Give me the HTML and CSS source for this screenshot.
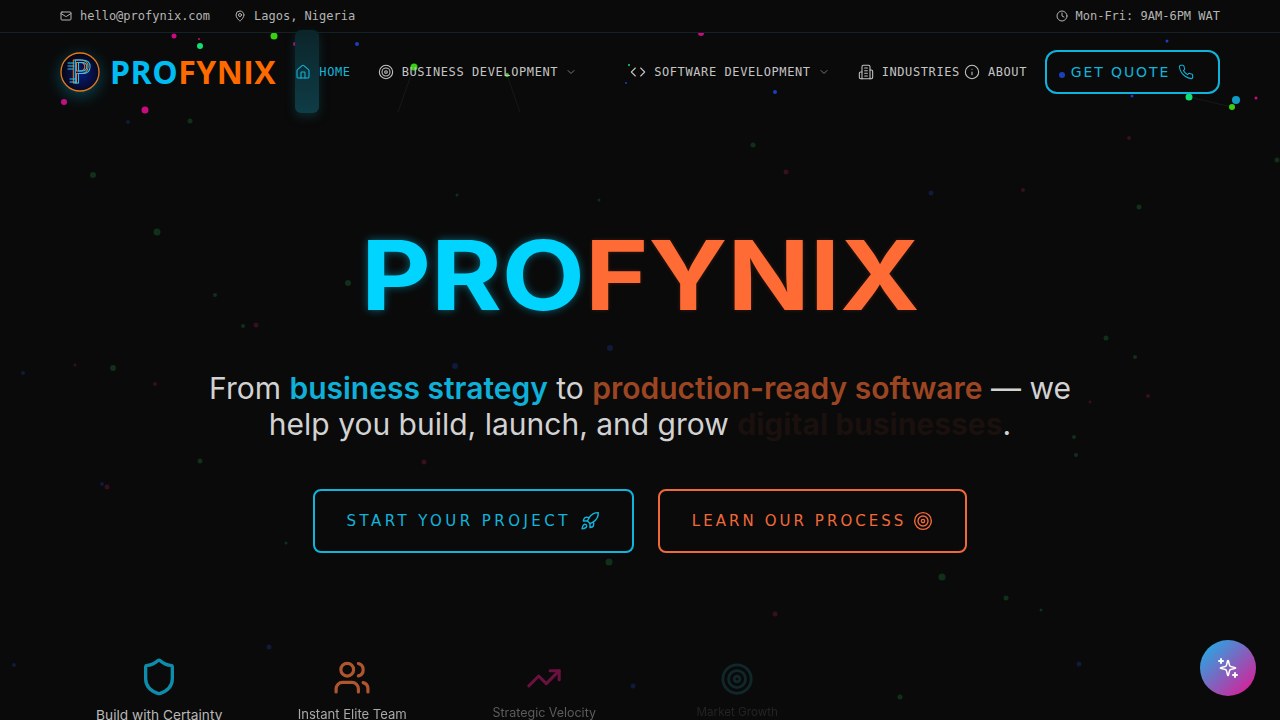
FILE: index.html
```html
<!DOCTYPE html>
<html>
  <head>
    <title>Profynix</title>
    <meta name="viewport" content="width=device-width, initial-scale=1">
    <link rel="stylesheet" href="styles.css">
  </head>
  <body>
    <svg class="sprite" width="0" height="0">
      <symbol id="i-mail" viewBox="0 0 24 24"><rect x="2" y="4" width="20" height="16" rx="2"/><path d="m22 7-8.97 5.7a1.94 1.94 0 0 1-2.06 0L2 7"/></symbol>
      <symbol id="i-pin" viewBox="0 0 24 24"><path d="M20 10c0 4.993-5.539 10.193-7.399 11.799a1 1 0 0 1-1.202 0C9.539 20.193 4 14.993 4 10a8 8 0 0 1 16 0"/><circle cx="12" cy="10" r="3"/></symbol>
      <symbol id="i-clock" viewBox="0 0 24 24"><circle cx="12" cy="12" r="10"/><polyline points="12 6 12 12 16 14"/></symbol>
      <symbol id="i-home" viewBox="0 0 24 24"><path d="M15 21v-8a1 1 0 0 0-1-1h-4a1 1 0 0 0-1 1v8"/><path d="M3 10a2 2 0 0 1 .709-1.528l7-5.999a2 2 0 0 1 2.582 0l7 5.999A2 2 0 0 1 21 10v9a2 2 0 0 1-2 2H5a2 2 0 0 1-2-2z"/></symbol>
      <symbol id="i-target" viewBox="0 0 24 24"><circle cx="12" cy="12" r="10"/><circle cx="12" cy="12" r="6"/><circle cx="12" cy="12" r="2"/></symbol>
      <symbol id="i-chevron" viewBox="0 0 24 24"><path d="m6 9 6 6 6-6"/></symbol>
      <symbol id="i-code" viewBox="0 0 24 24"><path d="m16 18 6-6-6-6"/><path d="m8 6-6 6 6 6"/></symbol>
      <symbol id="i-building" viewBox="0 0 24 24"><path d="M6 22V4a2 2 0 0 1 2-2h8a2 2 0 0 1 2 2v18Z"/><path d="M6 12H4a2 2 0 0 0-2 2v6a2 2 0 0 0 2 2h2"/><path d="M18 9h2a2 2 0 0 1 2 2v9a2 2 0 0 1-2 2h-2"/><path d="M10 6h4"/><path d="M10 10h4"/><path d="M10 14h4"/><path d="M10 18h4"/></symbol>
      <symbol id="i-info" viewBox="0 0 24 24"><circle cx="12" cy="12" r="10"/><path d="M12 16v-4"/><path d="M12 8h.01"/></symbol>
      <symbol id="i-phone" viewBox="0 0 24 24"><path d="M22 16.92v3a2 2 0 0 1-2.18 2 19.79 19.79 0 0 1-8.63-3.07 19.5 19.5 0 0 1-6-6 19.79 19.79 0 0 1-3.07-8.67A2 2 0 0 1 4.11 2h3a2 2 0 0 1 2 1.72 12.84 12.84 0 0 0 .7 2.81 2 2 0 0 1-.45 2.11L8.09 9.91a16 16 0 0 0 6 6l1.27-1.27a2 2 0 0 1 2.11-.45 12.84 12.84 0 0 0 2.81.7A2 2 0 0 1 22 16.92z"/></symbol>
      <symbol id="i-rocket" viewBox="0 0 24 24"><path d="M4.5 16.5c-1.5 1.26-2 5-2 5s3.74-.5 5-2c.71-.84.7-2.13-.09-2.91a2.18 2.18 0 0 0-2.91-.09z"/><path d="m12 15-3-3a22 22 0 0 1 2-3.95A12.88 12.88 0 0 1 22 2c0 2.72-.78 7.5-6 11a22.35 22.35 0 0 1-4 2z"/><path d="M9 12H4s.55-3.03 2-4c1.62-1.08 5 0 5 0"/><path d="M12 15v5s3.03-.55 4-2c1.08-1.62 0-5 0-5"/></symbol>
      <symbol id="i-shield" viewBox="0 0 24 24"><path d="M20 13c0 5-3.5 7.5-7.66 8.95a1 1 0 0 1-.67-.01C7.5 20.5 4 18 4 13V6a1 1 0 0 1 1-1c2 0 4.5-1.2 6.24-2.72a1.17 1.17 0 0 1 1.52 0C14.51 3.81 17 5 19 5a1 1 0 0 1 1 1z"/></symbol>
      <symbol id="i-users" viewBox="0 0 24 24"><path d="M16 21v-2a4 4 0 0 0-4-4H6a4 4 0 0 0-4 4v2"/><circle cx="9" cy="7" r="4"/><path d="M22 21v-2a4 4 0 0 0-3-3.87"/><path d="M16 3.13a4 4 0 0 1 0 7.75"/></symbol>
      <symbol id="i-trend" viewBox="0 0 24 24"><polyline points="22 7 13.5 15.5 8.5 10.5 2 17"/><polyline points="16 7 22 7 22 13"/></symbol>
      <symbol id="i-sparkles" viewBox="0 0 24 24"><path transform="translate(12 12) scale(0.76) translate(-12 -12)" d="M9.937 15.5A2 2 0 0 0 8.5 14.063l-6.135-1.582a.5.5 0 0 1 0-.962L8.5 9.936A2 2 0 0 0 9.937 8.5l1.582-6.135a.5.5 0 0 1 .963 0L14.063 8.5A2 2 0 0 0 15.5 9.937l6.135 1.581a.5.5 0 0 1 0 .964L15.5 14.063a2 2 0 0 0-1.437 1.437l-1.582 6.135a.5.5 0 0 1-.963 0z"/><path d="M5 3v4"/><path d="M7 5H3"/><path d="M19 17v4"/><path d="M21 19h-4"/></symbol>
    </svg>

    <!-- particle field -->
    <svg class="particles" width="1280" height="720" viewBox="0 0 1280 720">
      <g class="links">
        <line x1="1189" y1="97" x2="1232" y2="107"/>
        <line x1="1232" y1="107" x2="1236" y2="100"/>
        <line x1="414" y1="67" x2="398" y2="112"/>
        <line x1="507" y1="75" x2="520" y2="112"/>
      </g>
      <g class="magenta">
        <circle cx="174" cy="36" r="2.5"/><circle cx="199" cy="39" r="1"/><circle cx="295" cy="44" r="2"/>
        <circle cx="701" cy="33" r="3"/><circle cx="1256" cy="98" r="1.5"/><circle cx="64" cy="102" r="3"/>
        <circle cx="145" cy="110" r="3.5"/>
      </g>
      <g class="green">
        <circle cx="200" cy="46" r="3"/><circle cx="629" cy="65" r="1"/><circle cx="1189" cy="97" r="3.5"/>
      </g>
      <g class="lime">
        <circle cx="274" cy="36" r="3.5"/><circle cx="414" cy="67" r="3.5"/><circle cx="507" cy="75" r="2"/>
        <circle cx="1232" cy="107" r="3"/>
      </g>
      <g class="blue">
        <circle cx="357" cy="44" r="2"/><circle cx="626" cy="83" r="1"/><circle cx="775" cy="92" r="2"/>
        <circle cx="1167" cy="41" r="1.5"/><circle cx="1062" cy="75" r="3"/><circle cx="1132" cy="96" r="1.5"/>
      </g>
      <circle class="cyan" cx="1236" cy="100" r="4"/>
      <g class="dim-green">
        <circle cx="157" cy="232" r="3.5"/><circle cx="93" cy="175" r="3"/><circle cx="190" cy="121" r="2.5"/>
        <circle cx="753" cy="145" r="2.5"/><circle cx="1139" cy="207" r="2.5"/><circle cx="1277" cy="160" r="2.5"/>
        <circle cx="243" cy="326" r="2"/><circle cx="215" cy="295" r="2"/><circle cx="348" cy="283" r="3"/>
        <circle cx="1106" cy="338" r="2.5"/><circle cx="1135" cy="357" r="2"/><circle cx="1074" cy="437" r="2"/>
        <circle cx="1076" cy="455" r="2"/><circle cx="200" cy="461" r="2.5"/><circle cx="286" cy="543" r="1.5"/>
        <circle cx="609" cy="562" r="3.5"/><circle cx="942" cy="577" r="3.5"/><circle cx="1006" cy="598" r="2.5"/>
        <circle cx="1041" cy="610" r="1.5"/><circle cx="900" cy="697" r="2.5"/><circle cx="599" cy="200" r="1.5"/>
        <circle cx="457" cy="195" r="1.5"/><circle cx="113" cy="368" r="3"/>
      </g>
      <g class="dim-magenta">
        <circle cx="786" cy="172" r="2.5"/><circle cx="1023" cy="190" r="2"/><circle cx="1129" cy="138" r="2"/>
        <circle cx="155" cy="384" r="2"/><circle cx="256" cy="325" r="2.5"/><circle cx="1148" cy="396" r="2"/>
        <circle cx="1090" cy="402" r="1.5"/><circle cx="424" cy="462" r="2.5"/><circle cx="107" cy="487" r="2.5"/>
        <circle cx="775" cy="614" r="2.5"/><circle cx="75" cy="365" r="1.5"/>
      </g>
      <g class="dim-blue">
        <circle cx="931" cy="193" r="2.5"/><circle cx="23" cy="373" r="2"/><circle cx="455" cy="366" r="3"/>
        <circle cx="610" cy="348" r="3"/><circle cx="102" cy="484" r="2"/><circle cx="269" cy="647" r="2.5"/>
        <circle cx="14" cy="665" r="2"/><circle cx="1079" cy="664" r="2.5"/><circle cx="633" cy="686" r="2.5"/>
        <circle cx="128" cy="122" r="2"/>
      </g>
    </svg>

    <div class="page">
      <div class="topbar">
        <div class="topbar-group">
          <span class="contact"><svg class="icon"><use href="#i-mail"/></svg>hello@profynix.com</span>
          <span class="contact"><svg class="icon"><use href="#i-pin"/></svg>Lagos, Nigeria</span>
        </div>
        <span class="contact"><svg class="icon"><use href="#i-clock"/></svg>Mon-Fri: 9AM-6PM WAT</span>
      </div>

      <header class="header">
        <a class="brand">
          <svg class="brand-mark" viewBox="0 0 40 40" width="40" height="40">
            <defs>
              <radialGradient id="markFill" cx="55%" cy="55%" r="55%">
                <stop offset="0%" stop-color="#0a1a7a"/>
                <stop offset="100%" stop-color="#05060f"/>
              </radialGradient>
            </defs>
            <circle cx="20" cy="20" r="19" fill="url(#markFill)" stroke="#e8761e" stroke-width="1.3"/>
            <text x="20" y="31" class="mark-letter mark-orange">P</text>
            <text x="22" y="31" class="mark-letter mark-cyan">P</text>
            <path class="mark-traces" d="M8 11h6M8 14h6M8 17h5M10 27h5M10 30h6"/>
          </svg>
          <span class="brand-name"><span class="cyan-text">PRO</span><span class="orange-text">FYNIX</span></span>
        </a>
        <nav class="nav">
          <a class="nav-link active space-27"><span class="nav-glow"></span><svg class="icon-nav"><use href="#i-home"/></svg>HOME</a>
          <a class="nav-link space-53"><svg class="icon-nav"><use href="#i-target"/></svg>BUSINESS DEVELOPMENT<svg class="icon-chevron"><use href="#i-chevron"/></svg></a>
          <a class="nav-link space-28"><svg class="icon-nav"><use href="#i-code"/></svg>SOFTWARE DEVELOPMENT<svg class="icon-chevron"><use href="#i-chevron"/></svg></a>
          <a class="nav-link space-4"><svg class="icon-nav"><use href="#i-building"/></svg>INDUSTRIES</a>
          <a class="nav-link space-18"><svg class="icon-nav"><use href="#i-info"/></svg>ABOUT</a>
          <a class="quote-btn">GET QUOTE<svg class="icon-btn"><use href="#i-phone"/></svg></a>
        </nav>
      </header>

      <main class="hero">
        <h1 class="hero-title"><span class="title-pro">PRO</span><span class="title-fynix">FYNIX</span></h1>
        <p class="hero-sub">
          From <strong class="hl-blue">business strategy</strong> to <strong class="hl-orange">production-ready software</strong> — we<br>
          help you build, launch, and grow <strong class="hl-hidden">digital businesses</strong>.
        </p>
        <div class="hero-actions">
          <a class="cta cta-blue">START YOUR PROJECT<svg class="icon-cta"><use href="#i-rocket"/></svg></a>
          <a class="cta cta-orange">LEARN OUR PROCESS<svg class="icon-cta"><use href="#i-target"/></svg></a>
        </div>
        <div class="features">
          <div class="feature feature-1"><svg class="icon-feature"><use href="#i-shield"/></svg><span>Build with Certainty</span></div>
          <div class="feature feature-2"><svg class="icon-feature"><use href="#i-users"/></svg><span>Instant Elite Team</span></div>
          <div class="feature feature-3"><svg class="icon-feature"><use href="#i-trend"/></svg><span>Strategic Velocity</span></div>
          <div class="feature feature-4"><svg class="icon-feature"><use href="#i-target"/></svg><span>Market Growth</span></div>
        </div>
      </main>
    </div>

    <button class="fab"><svg class="icon-fab"><use href="#i-sparkles"/></svg></button>
  </body>
</html>
```

FILE: styles.css
```css
html, body {
    margin: 0;
    height: 720px;
    overflow: hidden;
}

body {
    background-color: #0a0a0a;
    color: #d4d4d4;
    font-family: Inter, sans-serif;
}

a {
    color: inherit;
    text-decoration: none;
}

svg {
    fill: none;
    stroke: currentColor;
    stroke-width: 2;
    stroke-linecap: round;
    stroke-linejoin: round;
    flex-shrink: 0;
}

.sprite {
    position: absolute;
}

.particles {
    position: absolute;
    top: 0;
    left: 0;
    stroke: none;
}

.links line { stroke: #131a1b; stroke-width: 1; }
.magenta { fill: #c80c80; }
.green { fill: #10e070; }
.lime { fill: #38d010; }
.blue { fill: #1c3fc0; }
.cyan { fill: #0e9cc4; }
.dim-green { fill: #10301a; }
.dim-magenta { fill: #36101f; }
.dim-blue { fill: #101a3a; }

.page {
    position: relative;
    height: 720px;
    overflow: hidden;
}

/* top strip */
.topbar {
    display: flex;
    justify-content: space-between;
    align-items: center;
    height: 32px;
    padding: 0 60px;
    border-bottom: 1px solid #122226;
    background-color: #0a0a0a;
    font-family: "DejaVu Sans Mono", monospace;
    font-size: 12px;
    color: #b4b4b4;
}

.topbar-group {
    display: flex;
    gap: 24px;
}

.contact {
    display: flex;
    align-items: center;
    gap: 8px;
}

.icon {
    width: 12px;
    height: 12px;
}

/* header */
.header {
    display: flex;
    justify-content: space-between;
    align-items: center;
    height: 78px;
    padding: 0 60px;
}

.brand {
    display: flex;
    align-items: center;
    gap: 10px;
}

.brand-mark {
    stroke: none;
    filter: drop-shadow(0 4px 8px rgba(0, 190, 230, 0.35));
}

.mark-letter {
    font-family: "DejaVu Sans Mono", monospace;
    font-size: 32px;
    font-weight: 400;
    text-anchor: middle;
    fill: none;
    stroke-width: 1;
}

.mark-orange { stroke: #e07b24; }
.mark-cyan { stroke: #28c8f0; }

.mark-traces {
    stroke: #28c8f0;
    stroke-width: 1;
}

.brand-name {
    font-family: "Open Sans", sans-serif;
    font-weight: 700;
    font-size: 32px;
    line-height: 1;
    letter-spacing: 0.5px;
}

.cyan-text { color: #00bcf2; }
.orange-text { color: #ff6a00; }

.nav {
    display: flex;
    align-items: center;
    font-family: "DejaVu Sans Mono", monospace;
    font-size: 12px;
    letter-spacing: 0.6px;
    color: #c4c4c4;
}

.nav-link {
    position: relative;
    display: flex;
    align-items: center;
    gap: 8px;
}

.space-4 { margin-right: 4px; }
.space-18 { margin-right: 18px; }
.space-27 { margin-right: 27px; }
.space-28 { margin-right: 28px; }
.space-53 { margin-right: 53px; }

.nav-link.active {
    isolation: isolate;
    color: #16b4dc;
}

.nav-glow {
    position: absolute;
    z-index: -1;
    top: -34px;
    left: 0;
    width: 24px;
    height: 83px;
    border-radius: 6px;
    background: linear-gradient(to bottom, #0b252a, #0f3c46);
    box-shadow: 0 4px 10px rgba(15, 70, 80, 0.5);
}

.icon-nav {
    width: 16px;
    height: 16px;
    stroke-width: 1.6;
}

.icon-chevron {
    width: 12px;
    height: 12px;
    margin-left: -1px;
    color: #777;
}

.quote-btn {
    display: flex;
    align-items: center;
    justify-content: center;
    gap: 8px;
    width: 175px;
    height: 44px;
    box-sizing: border-box;
    border: 2px solid #0fb4dc;
    border-radius: 12px;
    color: #0fb4dc;
    font-family: "DejaVu Sans", sans-serif;
    font-size: 14px;
    letter-spacing: 1.9px;
}

.icon-btn {
    width: 16px;
    height: 16px;
    stroke-width: 1.6;
}

/* hero */
.hero {
    display: flex;
    flex-direction: column;
    align-items: center;
    padding-top: 116px;
}

.hero-title {
    margin: 0;
    font-family: Inter, sans-serif;
    font-size: 96px;
    font-weight: 700;
    line-height: 96px;
    transform: scaleX(1.125);
}

.title-pro {
    color: #00d4ff;
    text-shadow: 0 0 8px rgba(0, 212, 255, 0.45);
}

.title-fynix {
    color: #ff6b35;
    text-shadow: 0 0 4px rgba(255, 107, 53, 0.2);
}

.hero-sub {
    margin: 47px 0 0;
    font-size: 30px;
    line-height: 36px;
    font-weight: 400;
    text-align: center;
    color: #d2d2d2;
}

.hero-sub strong {
    font-weight: 600;
}

.hl-blue { color: #0fb0d8; }
.hl-orange { color: #9c4522; }

.hero-sub .hl-hidden {
    color: #1a100d;
    font-weight: 700;
}

.hero-actions {
    display: flex;
    gap: 24px;
    margin-top: 47px;
}

.cta {
    display: flex;
    align-items: center;
    gap: 7px;
    height: 64px;
    box-sizing: border-box;
    padding: 0 32px;
    border: 2px solid;
    border-radius: 8px;
    font-family: "DejaVu Sans", sans-serif;
    font-size: 15px;
}

.cta-blue {
    gap: 9px;
    color: #12b4dc;
    letter-spacing: 3.45px;
}

.cta-orange {
    color: #f0693a;
    letter-spacing: 3.05px;
}

.icon-cta {
    width: 20px;
    height: 20px;
    stroke-width: 1.7;
}

.features {
    display: grid;
    grid-template-columns: repeat(4, 192.5px);
    align-self: flex-start;
    margin: 104px 0 0 63px;
}

.feature {
    display: flex;
    flex-direction: column;
    align-items: center;
    gap: 8px;
    font-size: 13.7px;
    line-height: 20px;
}

.icon-feature {
    width: 40px;
    height: 40px;
    stroke-width: 2;
}

.feature-1 { color: #b8b8b8; }
.feature-1 svg { color: #0d8cab; }

.feature-2 { color: #a8a8a8; transform: scale(0.955); }
.feature-2 svg { color: #b0562f; }

.feature-3 { color: #5c5c5c; transform: scale(0.91); }
.feature-3 svg { color: #6a1140; }

.feature-4 { color: #242424; transform: scale(0.85); }
.feature-4 svg { color: #10272c; }

/* floating assistant */
.fab {
    position: absolute;
    right: 24px;
    bottom: 24px;
    display: flex;
    align-items: center;
    justify-content: center;
    width: 56px;
    height: 56px;
    padding: 0;
    border: none;
    border-radius: 50%;
    background: linear-gradient(135deg, #12b8ec, #ec1090);
    color: #fff;
}

.icon-fab {
    width: 24px;
    height: 24px;
}
```
